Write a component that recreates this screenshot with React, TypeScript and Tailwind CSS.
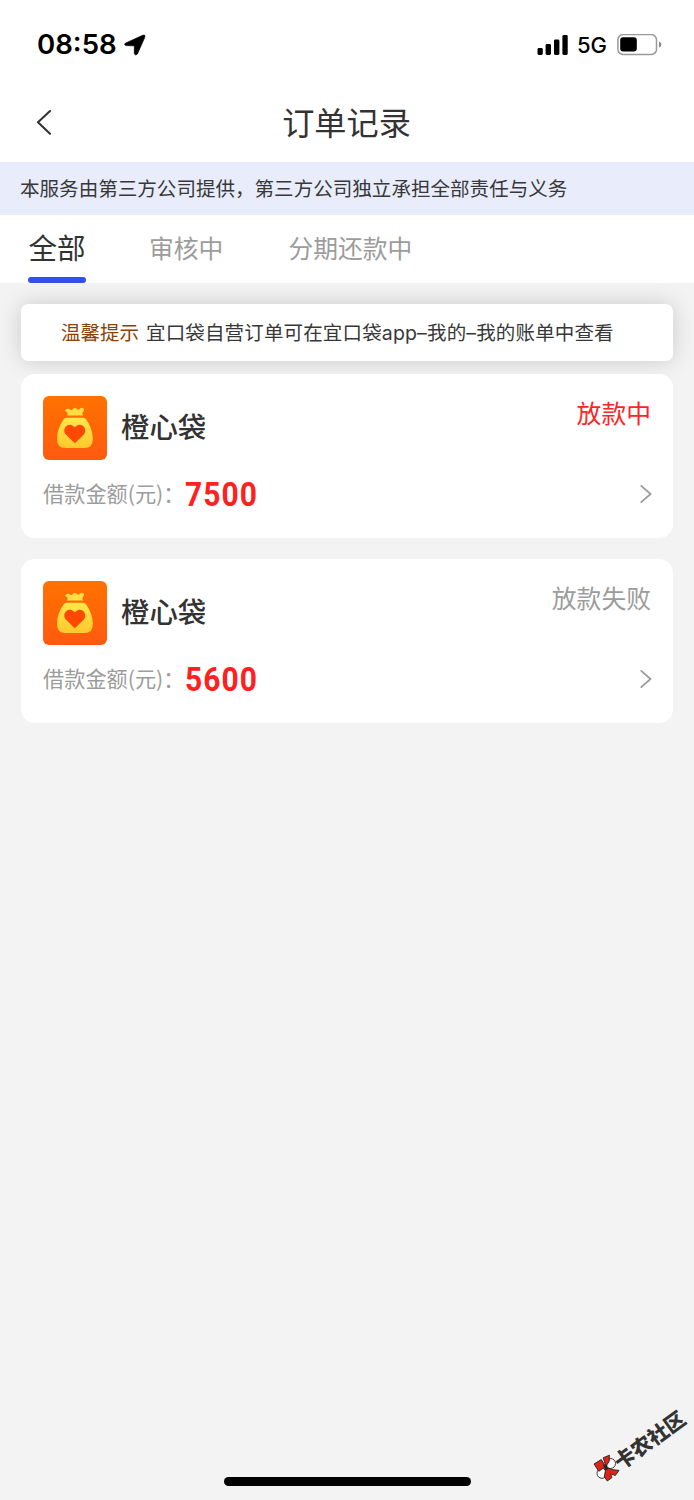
import { clsx } from "clsx";

type Order = {
  name: string;
  amount: string;
  status: string;
  active: boolean;
};

const tabs = [
  { label: "全部", className: "w-[58px] text-[28.5px] text-[#333]", active: true },
  { label: "审核中", className: "ml-[63px] text-[24.8px] text-[#9c9c9c]", active: false },
  { label: "分期还款中", className: "ml-[65px] text-[24.8px] text-[#9c9c9c]", active: false },
];

const orders: Order[] = [
  { name: "橙心袋", amount: "7500", status: "放款中", active: true },
  { name: "橙心袋", amount: "5600", status: "放款失败", active: false },
];

function StatusBar() {
  return (
    <div className="flex h-[84px] items-center pt-[5px] pl-[37px] pr-8 font-[Inter,sans-serif] text-black">
      <span className="text-[27.6px] leading-none font-semibold">08:58</span>
      <svg className="ml-[7px]" width="22" height="22" viewBox="0 0 22 22">
        <path
          d="M1.4 9.2 18.8 1.2Q21.6 .4 20.8 3.2L13.4 20Q11.4 21.9 10.3 19.8V12.4Q10.3 11.8 9.8 11.8L2 11.6Q-.4 10.6 1.4 9.2Z"
          fill="#000"
          stroke="#000"
          strokeWidth=".7"
          strokeLinejoin="round"
        />
      </svg>
      <div className="ml-auto flex items-center">
        <svg width="31" height="20" viewBox="0 0 31 20">
          <rect x="0.5" y="13" width="5.3" height="7" rx="1.4" />
          <rect x="8.6" y="9" width="5.4" height="11" rx="1.4" />
          <rect x="17" y="4.5" width="5.4" height="15.5" rx="1.4" />
          <rect x="25.4" y="0" width="5.3" height="20" rx="1.4" />
        </svg>
        <span className="ml-[9px] text-[22px] leading-none font-medium">5G</span>
        <svg className="ml-[10px]" width="45" height="22" viewBox="0 0 45 22">
          <rect x=".9" y=".6" width="38.6" height="19.8" rx="5.2" fill="none" stroke="#9a9a9a" strokeWidth="1.5" />
          <rect x="3.2" y="3.2" width="16.6" height="14.4" rx="3" />
          <path d="M42 7.4Q44.4 8.2 44.4 10.5T42 13.6Z" fill="#8a8a8a" />
        </svg>
      </div>
    </div>
  );
}

function BagIcon() {
  return (
    <svg width="64" height="64" viewBox="0 0 64 64">
      <defs>
        <linearGradient id="bagBg" x1="0" y1="0" x2="0" y2="1">
          <stop offset="0" stopColor="#ff7200" />
          <stop offset="1" stopColor="#ff5a10" />
        </linearGradient>
        <linearGradient id="bagFill" x1="0" y1="0" x2="0" y2="1">
          <stop offset="0" stopColor="#ffe84a" />
          <stop offset="1" stopColor="#ffc82c" />
        </linearGradient>
      </defs>
      <rect width="64" height="64" rx="6" fill="url(#bagBg)" />
      <path
        d="M22.6 13.8Q24.8 11.9 26.8 13.5Q28.6 14.8 30.3 12.4Q31.8 11.1 33.4 12.4Q35.4 14.8 36.8 12.8Q38.4 10.8 40.7 12.4Q41.8 13.5 40.3 15.4Q38.4 17.4 40.2 19.5H23.8Q25.9 17 23 15.4Q21.6 14.8 22.6 13.8Z"
        fill="#ffde42"
      />
      <path
        d="M23.6 21.8H40Q42 21.8 43.2 23.4C47.4 29.4 49.8 36 49.8 43Q49.8 52 41.5 52H22.3Q14 52 14 43C14 36 16.4 29.4 20.6 23.4Q21.7 21.8 23.6 21.8Z"
        fill="url(#bagFill)"
      />
      <path
        d="M31.8 47.2 23 38.8C18.6 34 23.4 27 29 29.2Q30.8 30 31.8 31.2Q32.8 30 34.6 29.2C40.2 27 45 34 40.6 38.8Z"
        fill="#ff4800"
      />
    </svg>
  );
}

function OrderCard({ order }: { order: Order }) {
  return (
    <div className="h-[164px] rounded-[14px] bg-white pt-[22px] pr-[22px] pl-[22px]">
      <div className="flex h-16 items-center">
        <BagIcon />
        <h2 className="ml-[14px] pb-[3px] text-[28.4px] leading-none font-medium text-[#333]">
          {order.name}
        </h2>
        <span
          className={clsx(
            "mt-px ml-auto self-start text-[24.8px] leading-[30px]",
            order.active ? "text-[#ff2424]" : "text-[#9c9c9c]",
          )}
        >
          {order.status}
        </span>
      </div>
      <div className="mt-[14px] flex h-10 items-center">
        <span className="w-[142px] pb-[3px] text-[21.2px] leading-none whitespace-nowrap text-[#9c9c9c]">
          借款金额(元)：
        </span>
        <span className="origin-left scale-x-[0.88] font-[Roboto,sans-serif] text-[34px] leading-none font-bold tracking-[1.2px] text-[#ff2020]">
          {order.amount}
        </span>
        <svg className="-mr-px ml-auto" width="12" height="20" viewBox="0 0 12 20" fill="none">
          <path d="M1.2 1.8 10.6 10 1.2 18.2" stroke="#999" strokeWidth="1.7" strokeLinecap="round" />
        </svg>
      </div>
    </div>
  );
}

function CommunityMark() {
  return (
    <div className="absolute top-[1390px] left-[574px] h-[110px] w-[120px]">
      <svg className="absolute top-[64px] left-[19px]" width="28" height="28" viewBox="0 0 28 28">
        <g stroke="#222" strokeWidth=".9">
          <circle cx="17.5" cy="9.5" r="5" fill="#fff" />
          <circle cx="9" cy="19.3" r="5" fill="#fff" />
          <path d="M1 10 8.3 5.5 12.6 12.5 5.8 17.3Z" fill="#df2318" />
          <path d="M10.2 3.8 16.4 1.2 16.3 7 13 12.5Z" fill="#df2318" />
          <path d="M13 13 18.5 15.5 26 16.4 22.3 21.5 17.6 19.8 19 23.6 14.3 27 11.3 22.8Z" fill="#df2318" />
        </g>
        <path d="M10.5 11 14.5 15.5M14 11.5 11.5 16" stroke="#222" strokeWidth="1.6" />
      </svg>
      <span className="absolute top-[39px] left-[34px] -rotate-[36deg] text-[20.5px] leading-none font-black whitespace-nowrap text-[#333]">
        卡农社区
      </span>
    </div>
  );
}

export default function App() {
  return (
    <div className="relative flex h-[1500px] w-[694px] flex-col overflow-hidden bg-[#f3f3f3] font-['Noto_Sans_CJK_SC',sans-serif] text-[#333]">
      <header className="h-[162px] bg-white">
        <StatusBar />
        <div className="grid h-[78px] grid-cols-[1fr_auto_1fr] items-center">
          <svg className="mb-0.5 ml-9" width="16" height="26" viewBox="0 0 16 26" fill="none">
            <path d="M14 2 2 13.3 14 24.7" stroke="#333" strokeWidth="2.1" strokeLinecap="round" strokeLinejoin="round" />
          </svg>
          <h1 className="pr-px pb-1 text-[32.2px] leading-none">订单记录</h1>
        </div>
      </header>

      <div className="flex h-[53px] items-center bg-[#e9ecfb] pb-0.5 pl-5 text-[19.56px] text-[#383838]">
        本服务由第三方公司提供，第三方公司独立承担全部责任与义务
      </div>

      <nav className="flex h-[68px] bg-white pl-7">
        {tabs.map((tab) => (
          <div
            key={tab.label}
            className={clsx("flex flex-col whitespace-nowrap", tab.className)}
          >
            <span className="flex h-[62px] items-center justify-center pt-0.5 leading-none">
              {tab.label}
            </span>
            {tab.active && <span className="h-[6px] rounded-full bg-[#3450ec]" />}
          </div>
        ))}
      </nav>

      <main className="px-[21px] pt-[21px]">
        <div className="flex h-[57px] items-baseline rounded-[7px] bg-white pt-[13px] pl-10 text-[19.5px] shadow-[0_0_22px_rgba(0,0,0,0.17)]">
          <span className="text-[#8a4208]">温馨提示</span>
          <span className="ml-[7px] font-[Inter,'Noto_Sans_CJK_SC',sans-serif] tracking-[0.15px] text-[#383838]">
            宜口袋自营订单可在宜口袋app–我的–我的账单中查看
          </span>
        </div>
        <div className="relative mt-[13px] flex flex-col gap-[21px]">
          {orders.map((order) => (
            <OrderCard key={order.amount} order={order} />
          ))}
        </div>
      </main>

      <CommunityMark />
      <div className="absolute top-[1477px] left-[224px] h-[9px] w-[247px] rounded-full bg-black" />
    </div>
  );
}
